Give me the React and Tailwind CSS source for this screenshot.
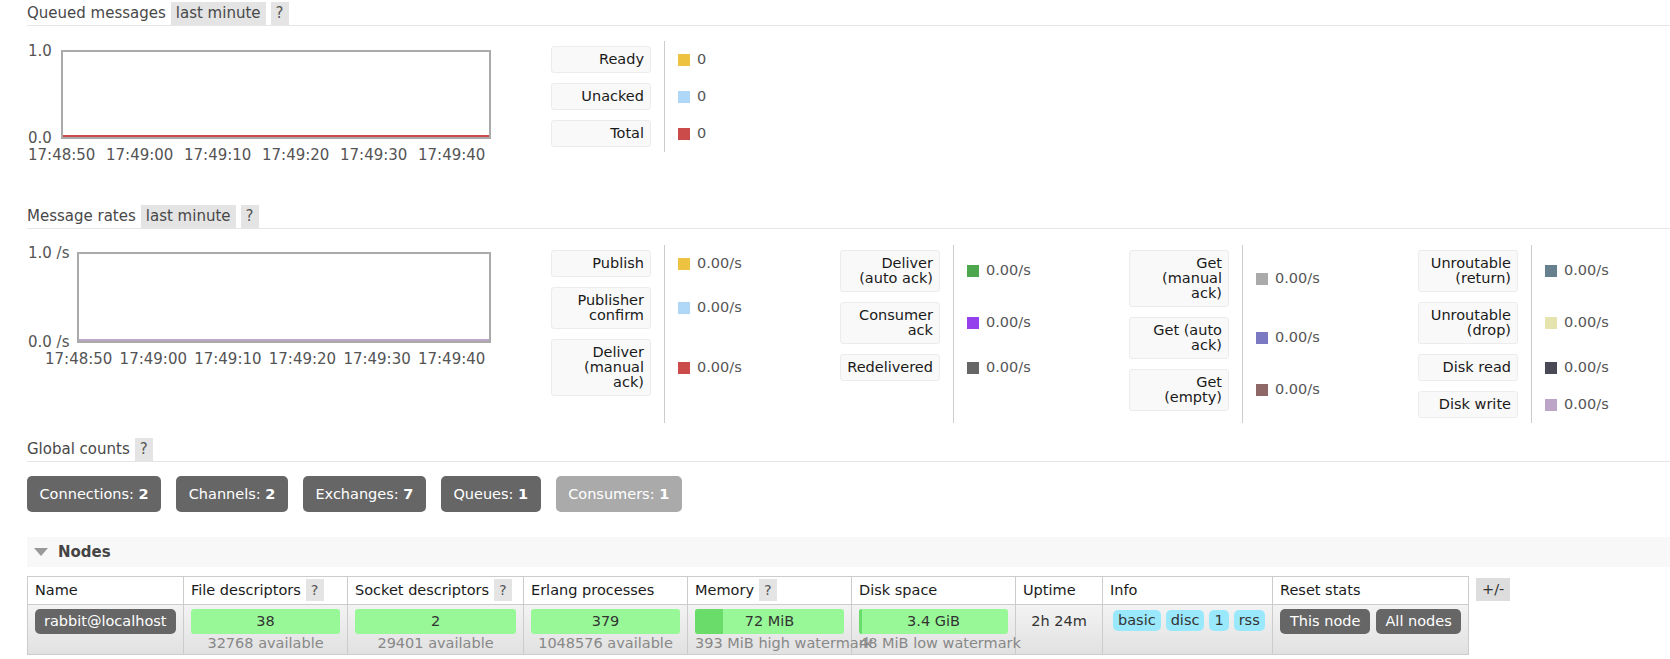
import React from 'react';

const QUEUED = [
  { label: ['Ready'], color: '#edc240', value: '0' },
  { label: ['Unacked'], color: '#afd8f8', value: '0' },
  { label: ['Total'], color: '#cb4b4b', value: '0' },
];

const RATES = [
  [
    { label: ['Publish'], color: '#edc240' },
    { label: ['Publisher', 'confirm'], color: '#afd8f8' },
    { label: ['Deliver', '(manual', 'ack)'], color: '#cb4b4b' },
  ],
  [
    { label: ['Deliver', '(auto ack)'], color: '#4da74d' },
    { label: ['Consumer', 'ack'], color: '#9440ed' },
    { label: ['Redelivered'], color: '#666666' },
  ],
  [
    { label: ['Get', '(manual', 'ack)'], color: '#aaaaaa' },
    { label: ['Get (auto', 'ack)'], color: '#7c79c3' },
    { label: ['Get', '(empty)'], color: '#8e6767' },
  ],
  [
    { label: ['Unroutable', '(return)'], color: '#67808e' },
    { label: ['Unroutable', '(drop)'], color: '#e5e4ae' },
    { label: ['Disk read'], color: '#4a4a56' },
    { label: ['Disk write'], color: '#bca5c7' },
  ],
];

const TICKS = ['17:48:50', '17:49:00', '17:49:10', '17:49:20', '17:49:30', '17:49:40'];

const COUNTS = [
  { name: 'Connections', n: 2 },
  { name: 'Channels', n: 2 },
  { name: 'Exchanges', n: 7 },
  { name: 'Queues', n: 1 },
  { name: 'Consumers', n: 1, dim: true },
];

// row height by number of label lines (border + padding + 15px lines)
const ROW_H = { 1: 'h-[27px]', 2: 'h-[42px]', 3: 'h-[57px]' };

function Help() {
  return <span className="ml-[5px] bg-[#e4e4e4] px-[5px] leading-[23px] text-[#555]">?</span>;
}

function Heading({ title, range }) {
  return (
    <div className="flex h-[26px] items-end border-b border-[#e6e6e6] text-[15px] text-[#484848]">
      <span className="leading-[23px]">{title}</span>
      {range && <span className="ml-[5px] bg-[#e4e4e4] px-[5px] leading-[23px]">{range}</span>}
      <Help />
    </div>
  );
}

function LegendColumn({ rows }) {
  return (
    <div className="flex w-[289px] shrink-0 items-stretch">
      <div className="flex w-[100px] flex-col gap-[10px] py-[5px]">
        {rows.map((r) => (
          <div
            key={r.label.join(' ')}
            className={`${ROW_H[r.label.length]} whitespace-nowrap rounded-[3px] border border-[#ececec] bg-[#f9f9f9] py-[5px] pr-[6px] text-right text-[14.5px] leading-[15px] text-[#1a1a1a]`}
          >
            {r.label.map((l) => (
              <div key={l}>{l}</div>
            ))}
          </div>
        ))}
      </div>
      <div className="ml-[13px] flex flex-col gap-[10px] border-l border-[#cccccc] py-[5px] pl-[13px]">
        {rows.map((r) => (
          <div key={r.label.join(' ')} className={`${ROW_H[r.label.length]} flex items-center`}>
            <span className="h-[12px] w-[12px]" style={{ backgroundColor: r.color }} />
            <span className="ml-[7px] text-[14.5px] text-[#555]">{r.value ?? '0.00/s'}</span>
          </div>
        ))}
      </div>
    </div>
  );
}

function Chart({ top, bottom, axisCls, boxCls, line, tickRowCls, tickCls, chartTopCls }) {
  return (
    <div className={`w-[464px] shrink-0 ${chartTopCls}`}>
      <div className="flex">
        <div className={`${axisCls} -my-[8px] flex flex-col justify-between pl-[1px] text-[15px] leading-[18px] text-[#545454]`}>
          <span>{top}</span>
          <span>{bottom}</span>
        </div>
        <div className={`${boxCls} flex flex-col justify-end border-2 border-[#aaaaaa] bg-white`}>
          <div className="h-[2px]" style={{ backgroundColor: line }} />
        </div>
      </div>
      <div className={`mt-[7px] flex whitespace-nowrap text-[15px] leading-[18px] text-[#545454] ${tickRowCls}`}>
        {TICKS.map((t) => (
          <span key={t} className={`${tickCls} shrink-0`}>
            {t}
          </span>
        ))}
      </div>
    </div>
  );
}

function Bar({ value, fill, sub, subLeft }) {
  return (
    <div>
      <div className="relative h-[25px] overflow-hidden rounded-[3px] bg-[#98f898]">
        {fill > 0 && <div className="absolute inset-y-0 left-0 bg-[#6adc6a]" style={{ width: `${fill}%` }} />}
        <div className="relative text-center leading-[25px] text-[#333]">{value}</div>
      </div>
      <div className={`whitespace-nowrap leading-[18px] text-[#888] ${subLeft ? 'text-left' : 'text-center'}`}>{sub}</div>
    </div>
  );
}

function Pill({ children, cls }) {
  return <span className={`inline-block rounded-[5px] ${cls}`}>{children}</span>;
}

const COLS = [
  ['Name', 'w-[156px]', false],
  ['File descriptors', 'w-[164px]', true],
  ['Socket descriptors', 'w-[176px]', true],
  ['Erlang processes', 'w-[164px]', false],
  ['Memory', 'w-[164px]', true],
  ['Disk space', 'w-[164px]', false],
  ['Uptime', 'w-[87px]', false],
  ['Info', 'w-[170px]', false],
  ['Reset stats', 'w-[196px]', false],
];

function NodesTable() {
  const td = 'border border-[#cccccc] px-[7px] pt-[4px] align-top';
  return (
    <div className="mt-[9px] flex items-start">
      <table className="w-[1441px] table-fixed border-collapse border border-[#cccccc] text-[14.5px]">
        <colgroup>
          {COLS.map(([n, w]) => (
            <col key={n} className={w} />
          ))}
        </colgroup>
        <thead>
          <tr className="h-[28px] bg-white">
            {COLS.map(([n, , help]) => (
              <th key={n} className="border border-[#cccccc] px-[7px] text-left font-normal whitespace-nowrap text-[#1a1a1a]">
                <span className="leading-[22px]">{n}</span>
                {help && <span className="ml-[5px] inline-block bg-[#e4e4e4] px-[5px] leading-[22px] text-[#555]">?</span>}
              </th>
            ))}
          </tr>
        </thead>
        <tbody>
          <tr className="h-[50px] bg-linear-to-b from-[#f3f3f3] to-[#e1e1e1]">
            <td className={td}>
              <Pill cls="bg-[#666666] px-[9px] leading-[25px] text-white">rabbit@localhost</Pill>
            </td>
            <td className={td}>
              <Bar value="38" fill={0} sub="32768 available" />
            </td>
            <td className={td}>
              <Bar value="2" fill={0} sub="29401 available" />
            </td>
            <td className={td}>
              <Bar value="379" fill={0} sub="1048576 available" />
            </td>
            <td className={td}>
              <Bar value="72 MiB" fill={18.5} sub="393 MiB high watermark" subLeft />
            </td>
            <td className={td}>
              <Bar value="3.4 GiB" fill={2} sub="48 MiB low watermark" subLeft />
            </td>
            <td className={`${td} text-center leading-[25px] text-[#333]`}>2h 24m</td>
            <td className={`${td} pl-[10px]`}>
              <div className="mt-[1px] flex gap-[5px]">
                {['basic', 'disc', '1', 'rss'].map((b) => (
                  <Pill key={b} cls="bg-[#9ae8fb] px-[5px] leading-[21px] text-[#333]">
                    {b}
                  </Pill>
                ))}
              </div>
            </td>
            <td className={td}>
              <div className="flex gap-[6px]">
                <Pill cls="bg-[#666666] px-[10px] leading-[25px] text-white">This node</Pill>
                <Pill cls="bg-[#666666] px-[9px] leading-[25px] text-white">All nodes</Pill>
              </div>
            </td>
          </tr>
        </tbody>
      </table>
      <span className="ml-[7px] mt-[2px] bg-[#dddddd] px-[6px] text-[14.5px] leading-[23px] text-[#333]">+/-</span>
    </div>
  );
}

export default function App() {
  return (
    <div className="h-[659px] w-[1670px] overflow-hidden bg-white pl-[27px] font-['DejaVu_Sans',Verdana,sans-serif] text-[#484848]">
      <Heading title="Queued messages" range="last minute" />
      <div className="mt-[15px] flex items-start">
        <Chart
          top="1.0"
          bottom="0.0"
          axisCls="w-[34px]"
          boxCls="w-[430px] h-[89px]"
          line="#cb4b4b"
          tickRowCls="pl-[1px]"
          tickCls="w-[78px]"
          chartTopCls="mt-[9px]"
        />
        <div className="ml-[60px] flex">
          <LegendColumn rows={QUEUED} />
        </div>
      </div>

      <div className="mt-[39px]">
        <Heading title="Message rates" range="last minute" />
      </div>
      <div className="mt-[16px] flex items-start">
        <Chart
          top="1.0 /s"
          bottom="0.0 /s"
          axisCls="w-[50px]"
          boxCls="w-[414px] h-[91px]"
          line="#bca5c7"
          tickRowCls="pl-[18px]"
          tickCls="w-[74.6px]"
          chartTopCls="mt-[7px]"
        />
        <div className="ml-[60px] flex">
          {RATES.map((col, i) => (
            <LegendColumn key={i} rows={col} />
          ))}
        </div>
      </div>

      <div className="mt-[13px]">
        <Heading title="Global counts" />
      </div>
      <div className="mt-[14px] flex gap-[15px] text-[14.5px]">
        {COUNTS.map((c) => (
          <span
            key={c.name}
            className={`rounded-[5px] px-[12.5px] py-[9px] leading-[18px] text-white ${c.dim ? 'bg-[#aaaaaa]' : 'bg-[#666666]'}`}
          >
            {c.name}: <b>{c.n}</b>
          </span>
        ))}
      </div>

      <div className="mt-[25px] flex h-[30px] items-center bg-[#f8f8f8] pl-[7px]">
        <span className="h-0 w-0 border-x-[7px] border-t-[8px] border-x-transparent border-t-[#999999]" />
        <span className="ml-[10px] text-[15px] font-bold text-[#444]">Nodes</span>
      </div>

      <NodesTable />
    </div>
  );
}
